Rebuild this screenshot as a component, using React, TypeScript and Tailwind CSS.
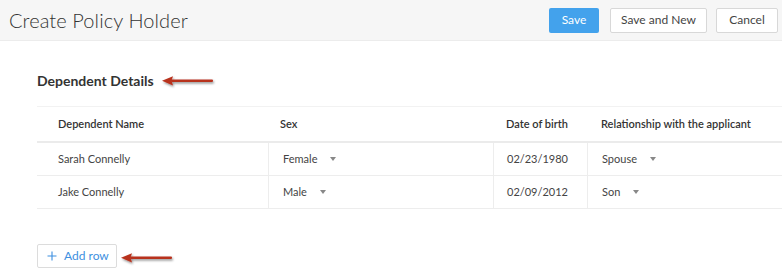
const rows = [
  { name: 'Sarah Connelly', sex: 'Female', dob: '02/23/1980', relation: 'Spouse' },
  { name: 'Jake Connelly', sex: 'Male', dob: '02/09/2012', relation: 'Son' },
]

function Caret() {
  return <span className="ml-[13px] inline-block h-0 w-0 border-x-[3.5px] border-t-[4px] border-x-transparent border-t-[#888]" />
}

function RedArrow() {
  return (
    <svg width="56" height="16" viewBox="0 0 56 16" className="shrink-0">
      <defs>
        <filter id="sh" x="-20%" y="-50%" width="140%" height="200%">
          <feDropShadow dx="1" dy="1.5" stdDeviation="1" floodColor="#000" floodOpacity="0.45" />
        </filter>
      </defs>
      <g filter="url(#sh)" fill="#b8321f">
        <rect x="10" y="6.5" width="42" height="2.6" rx="1" />
        <path d="M1 7.8 L12 3.2 L10.5 7.8 L12 12.4 Z" />
      </g>
    </svg>
  )
}

export default function App() {
  return (
    <div className="h-[279px] w-[782px] overflow-hidden bg-white font-['Lato',sans-serif] text-[#333]">
      <div className="flex h-[41px] items-center justify-between border-b border-[#ececec] bg-[#f6f6f6] pl-[9px] pr-[4px]">
        <h1 className="text-[20px] font-light tracking-[0.1px] text-[#333]">Create Policy Holder</h1>
        <div className="flex items-center">
          <button className="h-[25px] w-[50px] rounded-[2px] bg-[#43a2ec] text-[12px] text-white">Save</button>
          <button className="ml-[11px] h-[25px] w-[97px] rounded-[2px] border border-[#d8d8d8] bg-white text-[12px] text-[#444]">
            Save and New
          </button>
          <button className="ml-[9px] h-[25px] w-[62px] rounded-[2px] border border-[#d8d8d8] bg-white text-[12px] text-[#444]">
            Cancel
          </button>
        </div>
      </div>

      <div className="pl-[37px]">
        <div className="mt-[29px] flex items-center">
          <h2 className="text-[14px] font-bold text-[#333]">Dependent Details</h2>
          <span className="ml-[7px] mt-[1px]">
            <RedArrow />
          </span>
        </div>

        <div className="mt-[15px] w-[745px] text-[11px]">
          <div className="grid h-[37px] grid-cols-[231px_225px_94px_1fr] items-center border-t border-b-2 border-t-[#f2f2f2] border-b-[#ebebeb] font-semibold text-[#333]">
            <div className="pl-[21px]">Dependent Name</div>
            <div className="pl-[12px]">Sex</div>
            <div className="pl-[13px]">Date of birth</div>
            <div className="pl-[14px]">Relationship with the applicant</div>
          </div>
          {rows.map((r) => (
            <div
              key={r.name}
              className="grid h-[33px] grid-cols-[231px_225px_94px_1fr] border-b border-[#ededed] text-[#444]"
            >
              <div className="flex items-center pl-[21px]">{r.name}</div>
              <div className="flex items-center border-l border-[#ededed] pl-[14px]">
                {r.sex}
                <Caret />
              </div>
              <div className="flex items-center border-l border-[#ededed] pl-[13px]">{r.dob}</div>
              <div className="flex items-center border-l border-[#ededed] pl-[14px]">
                {r.relation}
                <Caret />
              </div>
            </div>
          ))}
        </div>

        <div className="mt-[35px] flex items-center">
          <button className="flex h-[24px] w-[80px] items-center rounded-[2px] border border-[#dcdcdc] bg-white pl-[9px] text-[12px] text-[#3d8fe0]">
            <svg width="10" height="10" viewBox="0 0 10 10" className="mr-[7px]">
              <path d="M5 0.5v9M0.5 5h9" stroke="#3d8fe0" strokeWidth="1.1" />
            </svg>
            Add row
          </button>
          <span className="ml-[3px] mt-[3px]">
            <RedArrow />
          </span>
        </div>
      </div>
    </div>
  )
}
